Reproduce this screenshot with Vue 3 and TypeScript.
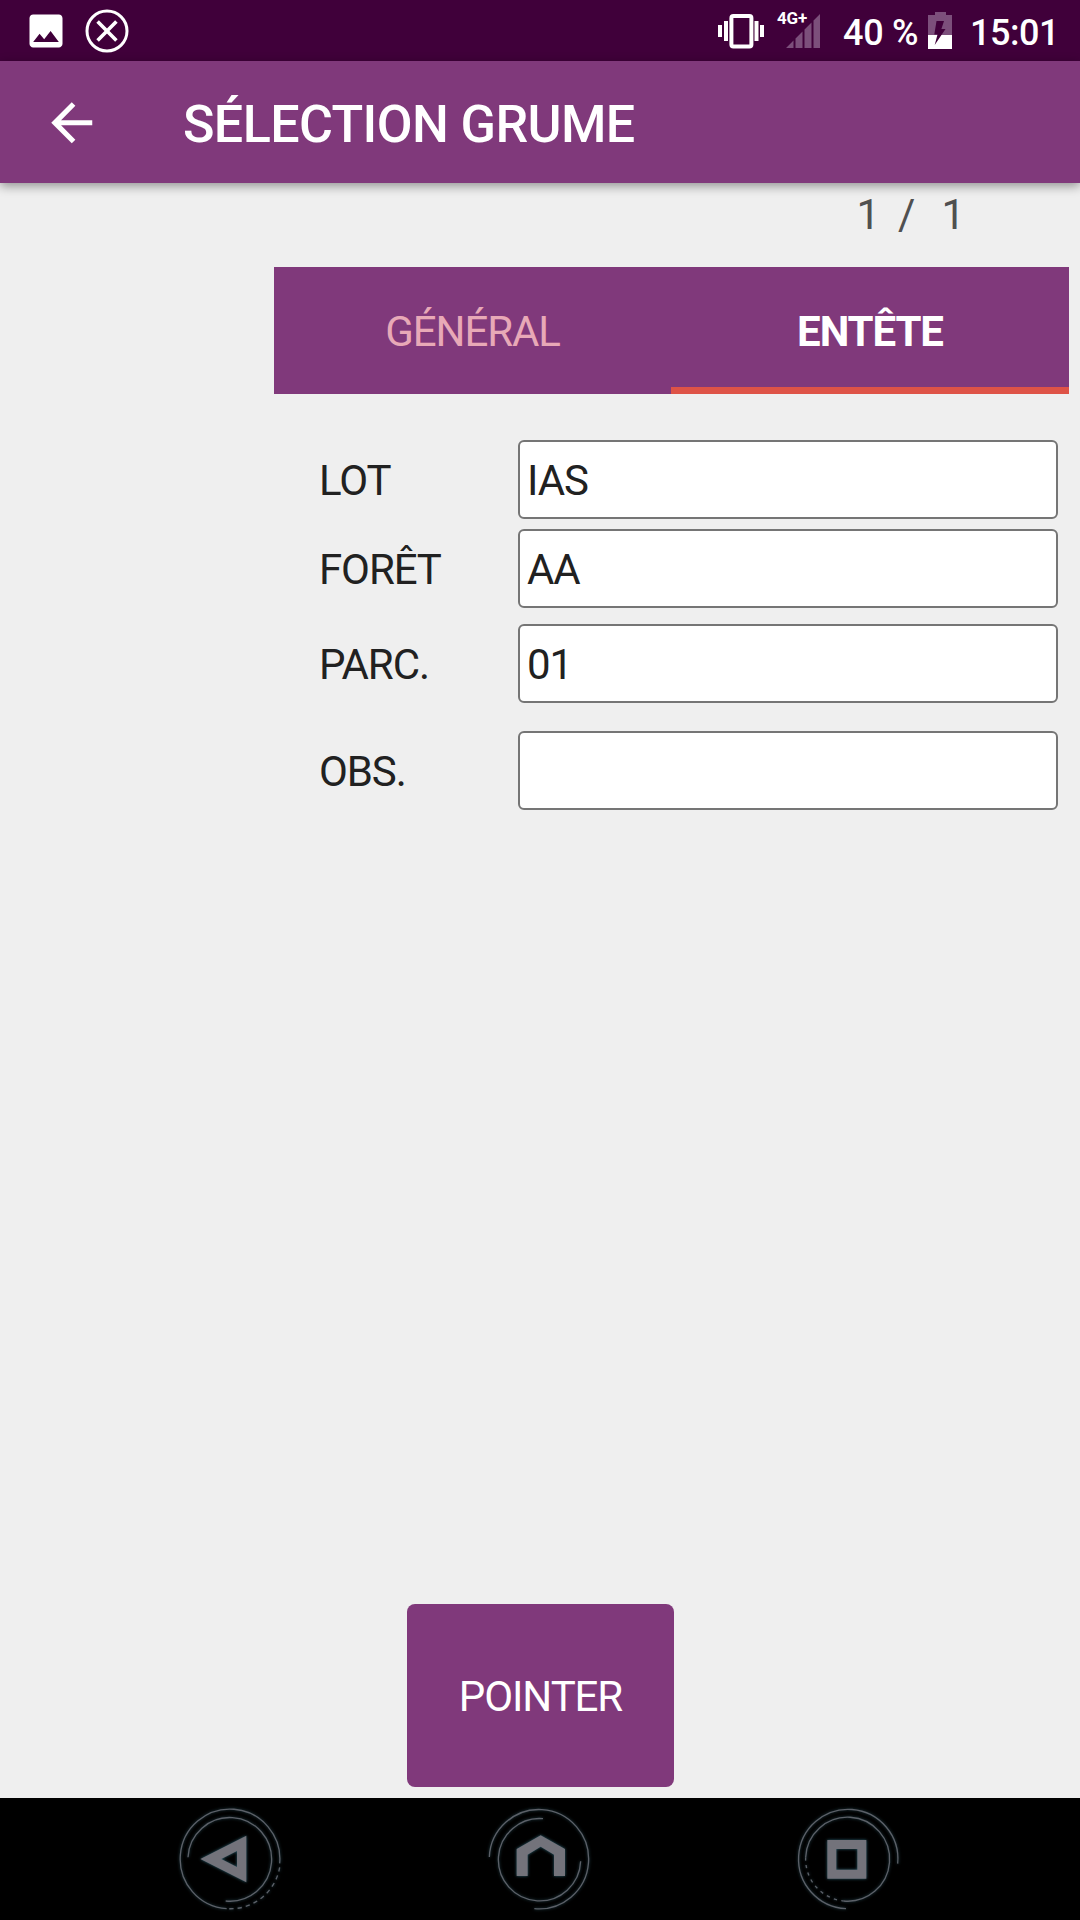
<script setup lang="ts">
import { ref } from 'vue'

interface Field {
  id: string
  label: string
  value: string
  gap: number
}

const fields = ref<Field[]>([
  { id: 'lot', label: 'LOT', value: 'IAS', gap: 46 },
  { id: 'foret', label: 'FORÊT', value: 'AA', gap: 10 },
  { id: 'parc', label: 'PARC.', value: '01', gap: 16 },
  { id: 'obs', label: 'OBS.', value: '', gap: 28 },
])

const tabs = ['GÉNÉRAL', 'ENTÊTE']
const activeTab = ref(1)
</script>

<template>
  <div class="screen">
    <header class="status">
      <svg class="ic-image" width="44" height="44" viewBox="0 0 24 24" fill="#fff">
        <path d="M21 19V5c0-1.1-.9-2-2-2H5c-1.1 0-2 .9-2 2v14c0 1.1.9 2 2 2h14c1.1 0 2-.9 2-2zM8.500 13.500l2.500 3.010L14.500 12l4.500 6H5l3.500-4.500z" />
      </svg>
      <svg class="ic-close" width="44" height="44" viewBox="0 0 44 44" fill="none" stroke="#fff">
        <circle cx="22" cy="22" r="20" stroke-width="3" />
        <path d="M12.600 12.600L31.400 31.400M31.400 12.600L12.600 31.400" stroke-width="3.600" />
      </svg>
      <span class="spacer"></span>
      <svg class="ic-vibrate" width="46" height="36" viewBox="0 0 46 36">
        <rect x="13.400" y="3.100" width="20" height="30.500" rx="2" fill="none" stroke="#fff" stroke-width="4" />
        <path d="M0 12h4v12H0zM6 8h4v20H6zM36.500 8h4v20h-4zM42 12h4v12h-4z" fill="#fff" />
      </svg>
      <svg class="ic-signal" width="45" height="40" viewBox="0 0 45 40">
        <path d="M10 38l7.500-7.500V38zM19.500 28.500l7-7V38h-7zM28.500 19.500l7-7V38h-7zM37.500 10.500L44 4v34h-6.500z" fill="#7c4f7b" />
        <text x="1" y="14" class="net">4G+</text>
      </svg>
      <span class="percent">40 %</span>
      <svg class="ic-battery" width="24" height="37" viewBox="0 0 24 37">
        <path d="M7 0h11v3h6v20H0V3h7z" fill="#7c4f7b" />
        <path d="M0 23h24v14H0z" fill="#fff" />
        <path d="M8.500 9H16l-2.600 8H17.500L6.700 33l2.800-10.500H6.300z" fill="#40003a" />
      </svg>
      <span class="clock">15:01</span>
    </header>

    <div class="toolbar">
      <svg width="61.500" height="61.500" viewBox="0 0 24 24" fill="#fff">
        <path d="M20 11H7.830l5.590-5.590L12 4l-8 8 8 8 1.410-1.410L7.830 13H20v-2z" />
      </svg>
      <h1>SÉLECTION GRUME</h1>
    </div>

    <main class="content">
      <div class="pager"><span>1</span><span class="slash">/</span><span>1</span></div>
      <nav class="tabs">
        <div v-for="(tab, i) in tabs" :key="tab" class="tab" :class="{ active: i === activeTab }">{{ tab }}</div>
      </nav>
      <div class="form">
        <div v-for="f in fields" :key="f.id" class="row" :style="{ marginTop: f.gap + 'px' }">
          <label :for="f.id">{{ f.label }}</label>
          <input :id="f.id" v-model="f.value" type="text" />
        </div>
      </div>
      <button class="pointer" type="button">POINTER</button>
    </main>

    <footer class="navbar">
      <svg class="nav" viewBox="0 9 360 366">
        <g class="ring">
          <path d="M170 341A149.500 149.500 0 1 1 329 205" />
          <path d="M329 217A149.500 149.500 0 0 1 172 341" stroke-dasharray="13 12" />
          <path d="M54 187A125.500 125.500 0 1 1 167 318" />
        </g>
        <path class="glyph" d="M91 192L229 122V262zM154 192L201 216V168z" />
      </svg>
      <svg class="nav" viewBox="0 9 360 366">
        <g class="ring">
          <path d="M28 186A149 149 0 1 1 163 341" />
          <path d="M189 71A123.500 123.500 0 1 0 302 199" />
        </g>
        <path class="glyph" d="M110 243V162L182 121L255 162V243H222V179L182 155L143 179V243z" />
      </svg>
      <svg class="nav" viewBox="0 9 360 366">
        <g class="ring">
          <path d="M323 206A149 149 0 1 0 168 341" />
          <path d="M47 187A126 126 0 1 1 161 318" />
          <path d="M47 187A126 126 0 0 0 161 318" stroke-dasharray="10 13" />
        </g>
        <path class="glyph" d="M112 135H229V251H112zM139 162V224H202V162z" />
      </svg>
    </footer>
  </div>
</template>

<style>
body {
  margin: 0;
  background: #efefef;
}
</style>

<style scoped>
.screen {
  width: 1080px;
  height: 1920px;
  display: flex;
  flex-direction: column;
  overflow: hidden;
  background: #efefef;
  font-family: Roboto, sans-serif;
  font-size: 42px;
  letter-spacing: -1.1px;
  color: #212121;
}
.status {
  height: 61px;
  flex: none;
  display: flex;
  align-items: flex-start;
  box-sizing: border-box;
  background: #40003a;
  color: #fff;
  font-size: 36px;
  font-weight: 500;
  line-height: 67px;
  letter-spacing: -0.3px;
  white-space: pre;
}
.status svg {
  flex: none;
}
.ic-image {
  margin: 8.5px 0 0 23.5px;
}
.ic-close {
  margin: 8.5px 0 0 17px;
}
.spacer {
  flex: 1;
}
.ic-vibrate {
  margin: 13px 0 0;
}
.ic-signal {
  margin: 10px 0 0 12px;
  overflow: visible;
}
.net {
  font: 700 17px Roboto, sans-serif;
  letter-spacing: -0.2px;
  fill: #fff;
}
.percent {
  width: 75px;
  margin-left: 22px;
}
.ic-battery {
  margin: 12px 0 0 10px;
}
.clock {
  width: 110px;
  margin-left: 18px;
  letter-spacing: -0.5px;
}
.toolbar {
  height: 122px;
  flex: none;
  display: flex;
  align-items: center;
  background: #80397b;
  box-shadow: 0 3px 10px rgba(0, 0, 0, 0.4);
  color: #fff;
}
.toolbar svg {
  margin: 1px 0 0 40.7px;
}
.toolbar h1 {
  margin: 6px 0 0 80.8px;
  font-size: 52px;
  font-weight: 500;
  line-height: 60px;
  letter-spacing: -0.6px;
}
.content {
  flex: 1;
  display: flex;
  flex-direction: column;
}
.pager {
  height: 84px;
  display: flex;
  justify-content: flex-end;
  line-height: 63px;
  letter-spacing: 0;
  color: #505050;
  padding-right: 115px;
}
.slash {
  margin: 0 26px 0 18px;
}
.tabs {
  height: 127px;
  flex: none;
  display: flex;
  margin: 0 11px 0 274px;
  background: #80397b;
}
.tab {
  width: 397px;
  box-sizing: border-box;
  line-height: 129px;
  text-align: center;
  color: #e8a9b7;
}
.tab.active {
  width: 398px;
  box-shadow: inset 0 -7px #de5347;
  color: #fff;
  font-weight: 700;
}
.form {
  margin: 0 22px 0 319px;
}
.row {
  display: flex;
  height: 79px;
}
.row label {
  width: 199px;
  line-height: 81px;
}
.row input {
  flex: 1;
  min-width: 0;
  box-sizing: border-box;
  height: 79px;
  margin: 0;
  padding: 2px 7px 0;
  border: 2px solid #757575;
  border-radius: 6px;
  background: #fff;
  font: inherit;
  letter-spacing: inherit;
  color: inherit;
}
.pointer {
  width: 267px;
  height: 183px;
  margin: auto 0 11px 407px;
  padding: 2px 0 0;
  border: 0;
  border-radius: 8px;
  background: #80397b;
  color: #fff;
  font: inherit;
  letter-spacing: inherit;
}
.navbar {
  height: 122px;
  flex: none;
  display: flex;
  gap: 190px;
  padding-left: 170px;
  background: #000;
}
.nav {
  width: 120px;
  height: 122px;
  flex: none;
}
.ring {
  fill: none;
  stroke: #5c6068;
  stroke-width: 4;
  filter: drop-shadow(0 0 5px #24434d);
}
.glyph {
  fill: #73737b;
  fill-rule: evenodd;
  filter: drop-shadow(0 0 5px #2c6070);
}
</style>
